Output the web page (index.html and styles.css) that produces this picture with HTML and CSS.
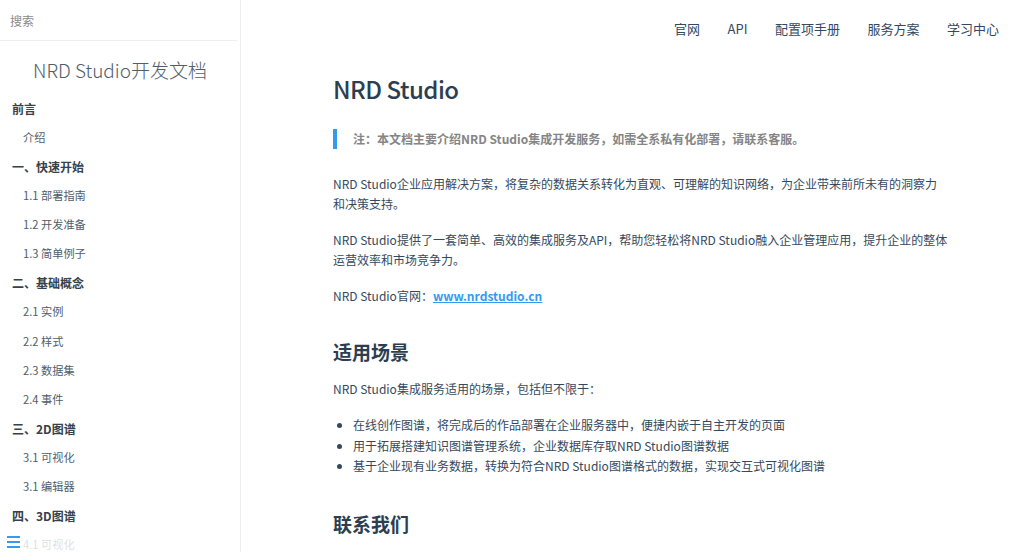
FILE: index.html
```html
<!DOCTYPE html>
<html lang="zh-CN">
<head>
<meta charset="utf-8">
<title>NRD Studio开发文档</title>
<link rel="stylesheet" href="styles.css">
</head>
<body>
<aside class="sidebar">
  <div class="search">
    <input class="search-input" type="search" placeholder="搜索">
  </div>
  <h1 class="app-name">NRD Studio开发文档</h1>
  <ul class="side-nav">
    <li class="group">前言</li>
    <li class="item">介绍</li>
    <li class="group">一、快速开始</li>
    <li class="item">1.1 部署指南</li>
    <li class="item">1.2 开发准备</li>
    <li class="item">1.3 简单例子</li>
    <li class="group">二、基础概念</li>
    <li class="item">2.1 实例</li>
    <li class="item">2.2 样式</li>
    <li class="item">2.3 数据集</li>
    <li class="item">2.4 事件</li>
    <li class="group">三、2D图谱</li>
    <li class="item">3.1 可视化</li>
    <li class="item">3.1 编辑器</li>
    <li class="group">四、3D图谱</li>
    <li class="item">4.1 可视化</li>
  </ul>
  <button class="sidebar-toggle" type="button" aria-label="切换侧边栏">
    <span></span><span></span><span></span>
  </button>
</aside>
<main class="content">
  <nav class="app-nav">
    <a href="#">官网</a>
    <a href="#">API</a>
    <a href="#">配置项手册</a>
    <a href="#">服务方案</a>
    <a href="#">学习中心</a>
  </nav>
  <article class="markdown-section">
    <h1 class="title">NRD Studio</h1>
    <blockquote class="note">
      <p>注：本文档主要介绍NRD Studio集成开发服务，如需全系私有化部署，请联系客服。</p>
    </blockquote>
    <p>NRD Studio企业应用解决方案，将复杂的数据关系转化为直观、可理解的知识网络，为企业带来前所未有的洞察力和决策支持。</p>
    <p>NRD Studio提供了一套简单、高效的集成服务及API，帮助您轻松将NRD Studio融入企业管理应用，提升企业的整体运营效率和市场竞争力。</p>
    <p>NRD Studio官网：<a class="link" href="#">www.nrdstudio.cn</a></p>
    <h2 class="subtitle">适用场景</h2>
    <p class="lead">NRD Studio集成服务适用的场景，包括但不限于：</p>
    <ul class="list">
      <li>在线创作图谱，将完成后的作品部署在企业服务器中，便捷内嵌于自主开发的页面</li>
      <li>用于拓展搭建知识图谱管理系统，企业数据库存取NRD Studio图谱数据</li>
      <li>基于企业现有业务数据，转换为符合NRD Studio图谱格式的数据，实现交互式可视化图谱</li>
    </ul>
    <h2 class="subtitle contact">联系我们</h2>
  </article>
</main>
</body>
</html>
```
FILE: styles.css
```css
* { box-sizing: border-box; }
html, body {
  margin: 0;
  height: 100%;
  overflow: hidden;
}
body {
  display: flex;
  font-family: "Noto Sans CJK SC", "Noto Sans", sans-serif;
  color: #34495e;
  background: #fff;
  -webkit-font-smoothing: antialiased;
}

/* ---------- sidebar ---------- */
.sidebar {
  position: relative;
  flex: 0 0 241px;
  width: 241px;
  height: 100%;
  overflow: hidden;
  border-right: 1px solid rgba(0, 0, 0, 0.07);
  background: #fff;
}
.search {
  height: 41px;
  padding: 0 5px;
  border-bottom: 1px solid #eee;
  margin-right: 3px;
  display: flex;
  align-items: center;
}
.search-input {
  width: 100%;
  border: 0;
  outline: none;
  background: transparent;
  font-family: inherit;
  font-size: 12px;
  padding: 0 5px;
  color: #333;
}
.search-input::placeholder { color: #8a8a8a; }
.app-name {
  margin: 15px 0 0;
  height: 28px;
  line-height: 28px;
  text-align: center;
  font-size: 19px;
  font-weight: 300;
  color: #505d6b;
}
.side-nav {
  list-style: none;
  margin: 10px 0 0;
  padding: 0;
}
.side-nav li {
  height: 29.07px;
  line-height: 29px;
  white-space: nowrap;
}
.side-nav .group {
  padding-left: 12px;
  font-size: 12px;
  font-weight: 700;
  color: #364149;
}
.side-nav .item {
  padding-left: 23px;
  font-size: 11.2px;
  color: #505d6b;
}
.sidebar-toggle {
  position: absolute;
  left: 0;
  bottom: 0;
  width: 227px;
  height: 24px;
  padding: 8px 7px;
  border: 0;
  background: rgba(255, 255, 255, 0.8);
  display: flex;
  flex-direction: column;
  gap: 3px;
  cursor: pointer;
}
.sidebar-toggle span {
  display: block;
  width: 13px;
  height: 2px;
  flex: 0 0 2px;
  background: #349af0;
}

/* ---------- main ---------- */
.content {
  flex: 1;
  min-width: 0;
  height: 100%;
}
.app-nav {
  display: flex;
  justify-content: flex-end;
  gap: 27.5px;
  padding: 20px 25px 0 0;
  height: 38px;
}
.app-nav a {
  font-size: 13px;
  line-height: 18px;
  color: #34495e;
  text-decoration: none;
}
.markdown-section {
  max-width: 640px;
  margin: 0 auto;
  padding: 35px 4px 32px 20.5px;
  font-size: 12px;
  line-height: 20px;
}
.title {
  margin: 0;
  font-size: 24px;
  line-height: 32px;
  font-weight: 500;
  letter-spacing: -0.5px;
  color: #2c3e50;
}
.note {
  margin: 24px 0 25px;
  padding-left: 16px;
  border-left: 4px solid #349af0;
  color: #858585;
}
.note p {
  margin: 0;
  font-weight: 600;
}
.markdown-section p {
  margin: 0 0 16px;
}
.markdown-section .note p { margin: 0; }
.link {
  color: #349af0;
  font-weight: 600;
  text-decoration: underline;
}
.subtitle {
  margin: 33px 0 14px;
  font-size: 19px;
  line-height: 26px;
  font-weight: 600;
  color: #2c3e50;
}
.markdown-section p.lead { margin-bottom: 16px; }
.list {
  margin: 0;
  padding-left: 20px;
}
.list li {
  line-height: 20.5px;
}
.subtitle.contact { margin-top: 34px; }
```
